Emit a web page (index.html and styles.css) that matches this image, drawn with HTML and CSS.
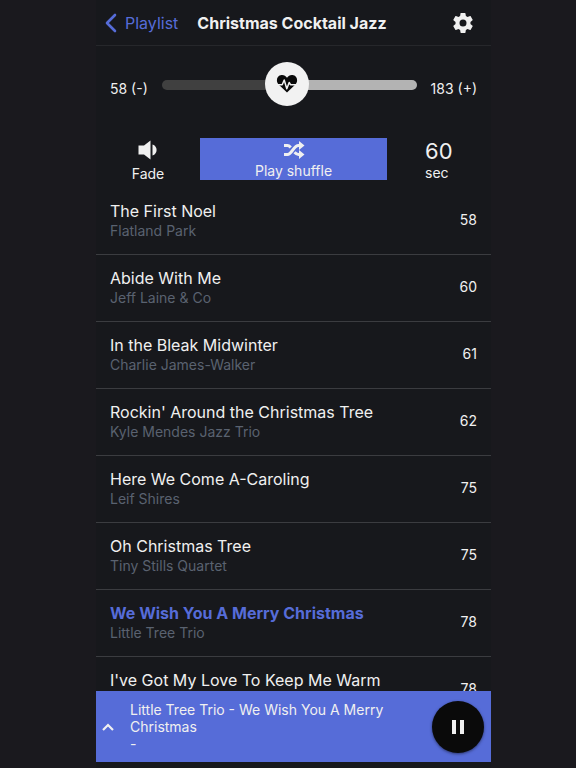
FILE: index.html
```html
<!DOCTYPE html>
<html lang="en">
  <head>
    <meta charset="utf-8">
    <meta name="viewport" content="width=device-width, initial-scale=1">
    <title>Christmas Cocktail Jazz</title>
    <link rel="stylesheet" href="styles.css">
  </head>
  <body>
    <div class="app">
      <header class="navbar">
        <a class="back" href="#">
          <svg width="12" height="20" viewBox="0 0 12 20"><path d="M10 2L2 10l8 8" fill="none" stroke="currentColor" stroke-width="2.6" stroke-linecap="round" stroke-linejoin="round"/></svg>
          Playlist
        </a>
        <h1>Christmas Cocktail Jazz</h1>
        <button class="settings" aria-label="Settings">
          <svg width="24" height="24" viewBox="0 0 24 24"><path fill="currentColor" d="M19.43 12.98c.04-.32.07-.64.07-.98s-.03-.66-.07-.98l2.11-1.65c.19-.15.24-.42.12-.64l-2-3.46c-.12-.22-.39-.3-.61-.22l-2.49 1c-.52-.4-1.08-.73-1.69-.98l-.38-2.65A.49.49 0 0 0 14 2h-4c-.25 0-.46.18-.49.42l-.38 2.65c-.61.25-1.17.59-1.69.98l-2.49-1c-.23-.09-.49 0-.61.22l-2 3.46c-.13.22-.07.49.12.64l2.11 1.65c-.04.32-.07.65-.07.98s.03.66.07.98l-2.11 1.65c-.19.15-.24.42-.12.64l2 3.46c.12.22.39.3.61.22l2.49-1c.52.4 1.08.73 1.69.98l.38 2.65c.03.24.24.42.49.42h4c.25 0 .46-.18.49-.42l.38-2.65c.61-.25 1.17-.59 1.69-.98l2.49 1c.23.09.49 0 .61-.22l2-3.46c.12-.22.07-.49-.12-.64l-2.11-1.65zM12 15.5a3.5 3.5 0 1 1 0-7 3.5 3.5 0 0 1 0 7z"/></svg>
        </button>
      </header>

      <!-- Tempo range -->
      <div class="tempo">
        <label for="bpm">58 (-)</label>
        <div class="slider">
          <input id="bpm" type="range" min="58" max="183" value="119">
          <svg class="heart" width="22" height="20" viewBox="0 0 22 20">
            <path fill="#0a0a0a" d="M11 18.6L2.6 10.4C-.4 7.2.6 1.500 5.600 1c2.300-.2 4.200 1 5.400 2.800C12.200 2 14.100.8 16.400 1c5 .5 6 6.200 3 9.400z"/>
            <path fill="none" stroke="#f2f2f2" stroke-width="1.500" stroke-linejoin="round" d="M0 10.700h6.200L8.200 6l2.600 8.800 2.400-6.300 1.300 2.200H22"/>
          </svg>
        </div>
        <span>183 (+)</span>
      </div>

      <div class="controls">
        <button class="fade">
          <svg width="20" height="20" viewBox="0 0 20 20"><path fill="currentColor" d="M.5 5.500H6L12.500.5v19L6 14.500H.500zM14.500 4.500C20 6 20 14 14.500 15.500z"/></svg>
          Fade
        </button>
        <button class="shuffle">
          <svg width="22" height="18" viewBox="0 0 22 18">
            <path fill="none" stroke="currentColor" stroke-width="3" d="M1 4.500h3.500c1.500 0 2.300 1 3.200 2M1 13.500h3.500c4.500 0 6-9 11-9h1.500M17 13.500h-1.500c-1.700 0-2.900-1-4-2.200"/>
            <path fill="currentColor" d="M16 0l5.500 4.500L16 9zM16 9l5.500 4.500L16 18z"/>
          </svg>
          Play shuffle
        </button>
        <div class="timer"><strong>60</strong>sec</div>
      </div>

      <ul class="songs">
        <li>
          <div><h2>The First Noel</h2><p>Flatland Park</p></div>
          <span>58</span>
        </li>
        <li>
          <div><h2>Abide With Me</h2><p>Jeff Laine &amp; Co</p></div>
          <span>60</span>
        </li>
        <li>
          <div><h2>In the Bleak Midwinter</h2><p>Charlie James-Walker</p></div>
          <span>61</span>
        </li>
        <li>
          <div><h2>Rockin' Around the Christmas Tree</h2><p>Kyle Mendes Jazz Trio</p></div>
          <span>62</span>
        </li>
        <li>
          <div><h2>Here We Come A-Caroling</h2><p>Leif Shires</p></div>
          <span>75</span>
        </li>
        <li>
          <div><h2>Oh Christmas Tree</h2><p>Tiny Stills Quartet</p></div>
          <span>75</span>
        </li>
        <li class="playing">
          <div><h2>We Wish You A Merry Christmas</h2><p>Little Tree Trio</p></div>
          <span>78</span>
        </li>
        <li>
          <div><h2>I've Got My Love To Keep Me Warm</h2></div>
          <span>78</span>
        </li>
      </ul>

      <footer class="player">
        <button class="expand" aria-label="Expand player">
          <svg width="14" height="10" viewBox="0 0 14 10"><path d="M2 8l5-5 5 5" fill="none" stroke="currentColor" stroke-width="2.200"/></svg>
        </button>
        <div class="now">Little Tree Trio - We Wish You A Merry Christmas<br>-</div>
        <button class="pause" aria-label="Pause">
          <svg width="14" height="14" viewBox="0 0 14 14"><path fill="currentColor" d="M1 0h4v14H1zM9 0h4v14H9z"/></svg>
        </button>
      </footer>
    </div>
  </body>
</html>
```
FILE: styles.css
```css
* {
  box-sizing: border-box;
}
body {
  margin: 0;
  padding: 0 85px 0 96px;
  background: #1a191e;
  color: #f0f0f0;
  font-family: Inter, "Liberation Sans", sans-serif;
  font-size: 14px;
}
h1, h2, p, ul {
  margin: 0;
  padding: 0;
}
svg {
  display: block;
}
button {
  padding: 0;
  border: 0;
  background: none;
  color: inherit;
  font: inherit;
}
.app {
  display: flex;
  flex-direction: column;
  height: 100vh;
  padding-bottom: 6px;
  background: #17181c;
}

/* header */
.navbar {
  display: flex;
  flex: none;
  align-items: center;
  height: 46px;
  padding: 0 16px 0 9px;
  border-bottom: 1px solid #26272b;
}
.back {
  display: flex;
  align-items: center;
  gap: 8px;
  color: #566cd8;
  font-size: 16px;
  text-decoration: none;
}
h1 {
  flex: 1;
  padding-left: 19px;
  font-size: 16px;
  font-weight: 700;
  white-space: nowrap;
}

/* tempo */
.tempo {
  display: flex;
  flex: none;
  align-items: center;
  gap: 14px;
  height: 84px;
  padding: 0 14px;
}
.slider {
  position: relative;
  flex: 1;
  padding-bottom: 6px;
}
.slider input {
  -webkit-appearance: none;
  appearance: none;
  display: block;
  width: 100%;
  height: 44px;
  margin: 0;
  background: none;
}
.slider input::-webkit-slider-runnable-track {
  height: 10px;
  border-radius: 5px;
  background: linear-gradient(to right, #404040 49%, #b3b3b3 49%);
}
.slider input::-webkit-slider-thumb {
  -webkit-appearance: none;
  width: 44px;
  height: 44px;
  margin-top: -18px;
  border-radius: 50%;
  background: #f2f2f2;
}
.heart {
  position: absolute;
  top: 11px;
  left: 49%;
  transform: translateX(-50%);
  pointer-events: none;
}

/* controls */
.controls {
  display: grid;
  flex: none;
  grid-template-columns: 104px 1fr 104px;
  height: 58px;
  padding-top: 8px;
}
.controls button, .timer {
  display: flex;
  flex-direction: column;
  align-items: center;
  line-height: 18px;
}
.fade {
  gap: 5px;
  padding-top: 2px;
}
.shuffle {
  gap: 3px;
  height: 42px;
  padding-top: 3px;
  background: #566cd8;
}
.controls .timer {
  align-items: flex-start;
  padding-left: 38px;
}
.timer strong {
  font-size: 22px;
  font-weight: 400;
  line-height: 26px;
}

/* song list */
.songs {
  flex: 1;
  min-height: 0;
  overflow: hidden;
  list-style: none;
}
.songs li {
  display: flex;
  align-items: center;
  justify-content: space-between;
  height: 67px;
  padding: 0 14px;
  border-bottom: 1px solid #3b3c40;
}
.songs li > div {
  height: 40px;
}
.songs span {
  padding-bottom: 3px;
}
h2 {
  font-size: 16px;
  font-weight: 400;
  line-height: 21px;
}
.songs p {
  color: #5a6270;
  line-height: 18px;
}
.playing h2 {
  color: #566cd8;
  font-weight: 700;
}

/* player */
.player {
  display: flex;
  flex: none;
  align-items: center;
  height: 71px;
  padding: 0 7px 0 5px;
  background: #566cd8;
}
.now {
  flex: 1;
  padding: 0 40px 0 15px;
  line-height: 17px;
}
.pause {
  display: flex;
  align-items: center;
  justify-content: center;
  width: 52px;
  height: 52px;
  border-radius: 50%;
  background: #0a0a0a;
  box-shadow: 0 1px 3px rgba(0, 0, 0, 0.5);
}
```
